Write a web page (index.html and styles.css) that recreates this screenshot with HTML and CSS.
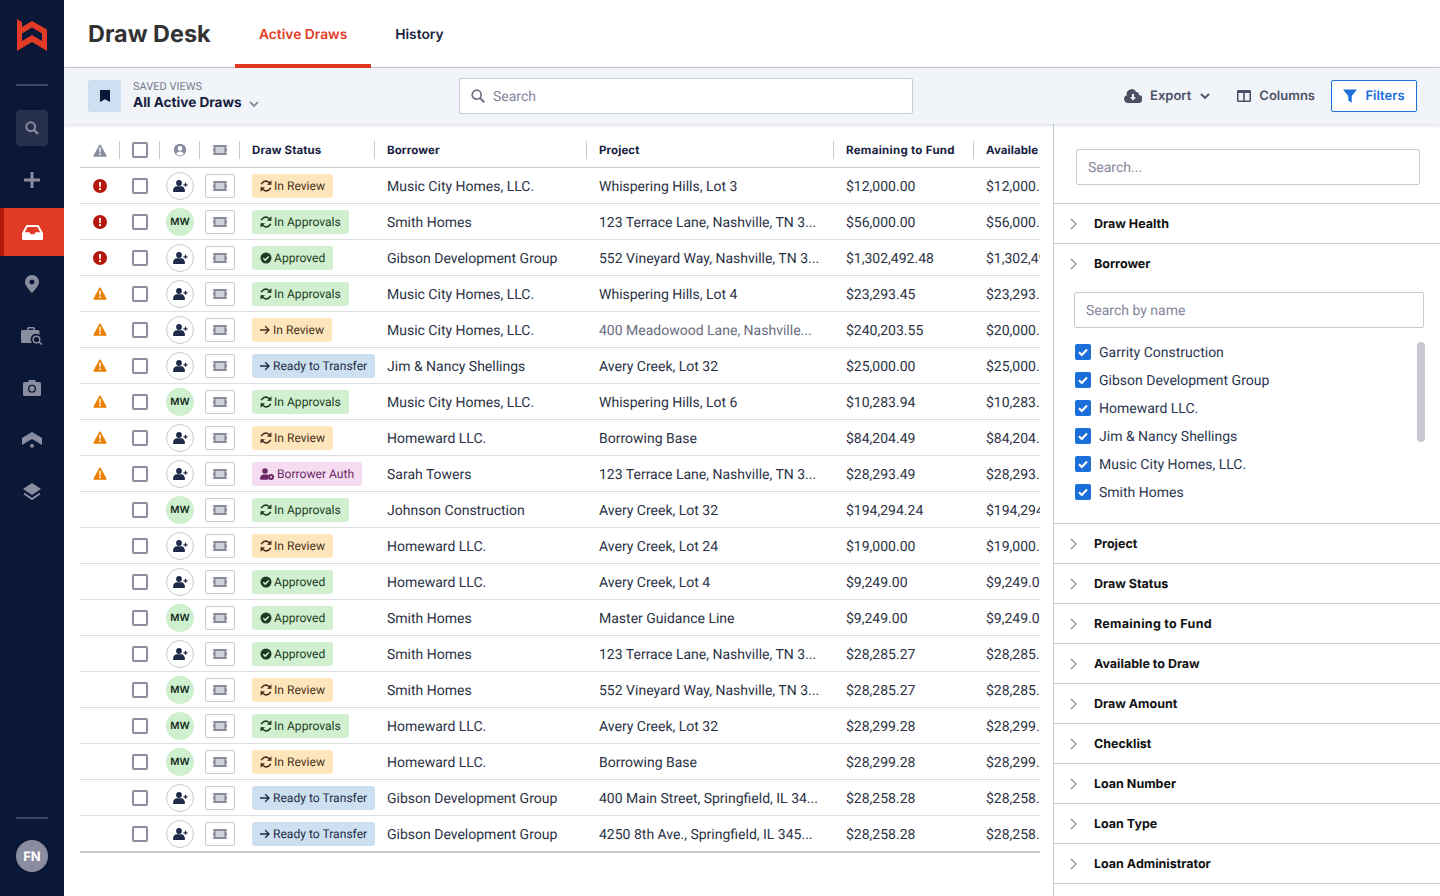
FILE: index.html
```html
<!DOCTYPE html>
<html lang="en">
<head>
<meta charset="utf-8">
<title>Draw Desk</title>
<link rel="stylesheet" href="styles.css">
</head>
<body>
<svg class="defs" aria-hidden="true">
  <symbol id="warn" viewBox="0 0 14 13"><path d="M7 1.2 13 12H1Z" fill="currentColor" stroke="currentColor" stroke-width="1.4" stroke-linejoin="round"/><path d="M6.2 3.8h1.6l-.2 4.6H6.4Z" fill="#fff"/><circle cx="7" cy="10.2" r=".95" fill="#fff"/></symbol>
  <symbol id="alert" viewBox="0 0 14 14"><circle cx="7" cy="7" r="7" fill="currentColor"/><path d="M6 3h2l-.3 5.2H6.3Z" fill="#fff"/><circle cx="7" cy="10.2" r="1.1" fill="#fff"/></symbol>
  <symbol id="userc" viewBox="0 0 14 14"><circle cx="7" cy="7" r="6.2" fill="currentColor"/><circle cx="7" cy="5.4" r="2.3" fill="#fff"/><path d="M3.2 11c.5-1.8 2-2.6 3.8-2.6s3.300.8 3.800 2.600A6 6 0 0 1 3.200 11Z" fill="#fff"/></symbol>
  <symbol id="uplus" viewBox="0 0 15 12"><circle cx="6" cy="3" r="2.900" fill="currentColor"/><path d="M0 11c0-3 2-4.700 3.800-4.700h4.400C10 6.300 12 8 12 11c0 .6-.4 1-1 1H1c-.6 0-1-.4-1-1Z" fill="currentColor"/><path d="M12.500 2.800v4M10.500 4.800h4" stroke="currentColor" stroke-width="1.300"/></symbol>
  <symbol id="ticket" viewBox="0 0 14 10"><path d="M.8 0h12.400a.8.8 0 0 1 .8.800v.8a1 1 0 0 0 0 2v2.800a1 1 0 0 0 0 2v.800a.8.8 0 0 1-.8.800H.8a.8.8 0 0 1-.8-.8v-.8a1 1 0 0 0 0-2V3.600a1 1 0 0 0 0-2V.8A.8.8 0 0 1 .8 0Z" fill="currentColor"/><rect x="2.600" y="2" width="8.800" height="6" rx=".6" fill="#cfd0d9"/></symbol>
  <symbol id="sync" viewBox="0.500 0.500 11 11"><g fill="none" stroke="currentColor" stroke-width="1.400"><path d="M10 4.600A4.200 4.200 0 0 0 2.700 3.100L1.500 4.300"/><path d="M2 7.400a4.200 4.200 0 0 0 7.300 1.500l1.200-1.200"/></g><path d="M11 .8v4.100H6.900ZM1 11.200V7.100h4.100Z" fill="currentColor"/></symbol>
  <symbol id="okc" viewBox="0 0 12 12"><circle cx="6" cy="6" r="5.500" fill="currentColor"/><path d="m3.300 6.200 1.900 1.900 3.500-3.600" fill="none" stroke="#d0f0d0" stroke-width="1.500"/></symbol>
  <symbol id="arrow" viewBox="1 0 12 12"><path d="M1 6h8.800M6.200 2.300 9.900 6 6.200 9.700" fill="none" stroke="currentColor" stroke-width="1.500"/></symbol>
  <symbol id="auth" viewBox="0 0 14 12"><circle cx="5" cy="3" r="2.800" fill="currentColor"/><path d="M0 11c0-3 1.700-4.500 3.300-4.500h3.400c1 0 1.700.5 2.200 1.200L8 11.800H1c-.6 0-1-.3-1-.8Z" fill="currentColor"/><circle cx="11" cy="9" r="3" fill="currentColor"/><circle cx="11" cy="9" r="1" fill="#f5dcf0"/></symbol>
  <symbol id="chev" viewBox="0 0 10 6"><path d="m1 1 4 4 4-4" fill="none" stroke="currentColor" stroke-width="1.800"/></symbol>
  <symbol id="chevr" viewBox="0 0 7 12"><path d="m1 1 5 5-5 5" fill="none" stroke="currentColor" stroke-width="1.300"/></symbol>
  <symbol id="tick" viewBox="0 0 16 16"><path d="m4 8.300 2.800 2.700 5.200-5.500" fill="none" stroke="#fff" stroke-width="2"/></symbol>
</svg>

<div class="app">
  <nav class="rail">
    <svg class="logo" viewBox="0 0 30 32" width="30" height="32"><path fill-rule="evenodd" fill="#e23b25" d="M0 0 5 3V8L15 2 30 10.500V32L15 23 0 32ZM5 14.500V22L15 16 25 22V14.500L15 8.500Z"/></svg>
    <div class="rule"></div>
    <ul class="rail-list">
      <li class="rail-item"><span class="rail-tile"><svg viewBox="0 0 14 14" width="14" height="14"><circle cx="5.700" cy="5.700" r="4.400" fill="none" stroke="currentColor" stroke-width="2"/><path d="m9 9 4 4" stroke="currentColor" stroke-width="2.400"/></svg></span></li>
      <li class="rail-item"><svg viewBox="0 0 16 16" width="16" height="16"><path d="M8 1v14M1 8h14" stroke="currentColor" stroke-width="3" stroke-linecap="round"/></svg></li>
      <li class="rail-item rail-active"><svg viewBox="0 0 21 15" width="21" height="15"><path d="M4.500 0h12l4.500 8v5.500a1.500 1.500 0 0 1-1.500 1.500h-18A1.500 1.500 0 0 1 0 13.500V8Z" fill="#fff"/><path d="M5.500 2h10l2.600 5.300h-4.600l-1.200 2h-3.600l-1.200-2H2.900Z" fill="#e23b25"/></svg></li>
      <li class="rail-item"><svg viewBox="0 0 14 18" width="14" height="18"><path fill-rule="evenodd" d="M7 0a7 7 0 0 1 7 7c0 3-3.500 7.500-7 11C3.500 14.500 0 10 0 7a7 7 0 0 1 7-7Zm0 4.500a2.500 2.500 0 1 0 0 5 2.500 2.500 0 0 0 0-5Z" fill="currentColor"/></svg></li>
      <li class="rail-item"><svg viewBox="0 0 22 18" width="22" height="18"><path d="M1.500 3H6V1.500A1.500 1.500 0 0 1 7.500 0h5A1.500 1.500 0 0 1 14 1.500V3h3a1.500 1.500 0 0 1 1.500 1.500V8a5.500 5.500 0 0 0-7.500 8H1.500A1.500 1.500 0 0 1 0 14.500v-10A1.500 1.500 0 0 1 1.500 3ZM7.500 1.500V3h5V1.500Z" fill="currentColor" fill-rule="evenodd"/><circle cx="15.500" cy="12.500" r="3.300" fill="none" stroke="currentColor" stroke-width="1.500"/><path d="m18 15 3 2.600" stroke="currentColor" stroke-width="1.500"/></svg></li>
      <li class="rail-item"><svg viewBox="0 0 18 16" width="18" height="16"><path fill-rule="evenodd" d="M1.500 2H5l1-2h6l1 2h3.500A1.500 1.500 0 0 1 18 3.500v11a1.500 1.500 0 0 1-1.500 1.500h-15A1.500 1.500 0 0 1 0 14.500v-11A1.500 1.500 0 0 1 1.500 2ZM9 4.800a4 4 0 1 0 0 8 4 4 0 0 0 0-8Zm0 1.300a2.700 2.700 0 1 1 0 5.400 2.700 2.700 0 0 1 0-5.400Z" fill="currentColor"/></svg></li>
      <li class="rail-item"><svg viewBox="0 0 20 16" width="20" height="16"><path d="M10 0 20 6v7l-10-6L0 13V6Z" fill="currentColor"/><circle cx="10" cy="13.800" r="2" fill="currentColor"/></svg></li>
      <li class="rail-item"><svg viewBox="0 0 18 19" width="18" height="19"><path d="M9 0 18 6 9 12 0 6Z" fill="currentColor"/><path d="M1 10.500 9 16l8-5.500" fill="none" stroke="currentColor" stroke-width="2"/></svg></li>
    </ul>
    <div class="rail-foot">
      <div class="rule"></div>
      <div class="me">FN</div>
    </div>
  </nav>

  <main class="main">
    <header class="top">
      <h1 class="title">Draw Desk</h1>
      <a class="tab tab-on">Active Draws</a>
      <a class="tab">History</a>
    </header>

    <section class="tools">
      <div class="views">
        <span class="views-tile"><svg viewBox="0 0 10 12" width="10" height="12"><path d="M0 0h10v12L5 9.200 0 12Z" fill="#0b1736"/></svg></span>
        <div class="views-text">
          <div class="views-label">SAVED VIEWS</div>
          <div class="views-name">All Active Draws <svg class="views-chev" width="10" height="6"><use href="#chev"/></svg></div>
        </div>
      </div>
      <label class="search">
        <svg viewBox="0 0 14 14" width="14" height="14"><circle cx="5.700" cy="5.700" r="4.500" fill="none" stroke="currentColor" stroke-width="1.700"/><path d="m9 9 4.300 4.300" stroke="currentColor" stroke-width="2"/></svg>
        <input class="search-input" placeholder="Search">
      </label>
      <div class="actions">
        <a class="action action-export">
          <svg viewBox="0 0 18 14" width="18" height="14"><path fill-rule="evenodd" d="M4 14a4 4 0 0 1-1.200-7.800A5 5 0 0 1 12.200 3 3 3 0 0 1 15 5.900 4 4 0 0 1 14 14ZM8 5v3.200H5.800L9 11.400l3.200-3.200H10V5Z" fill="currentColor"/></svg>
          Export
          <svg class="action-chev" width="10" height="6"><use href="#chev"/></svg>
        </a>
        <a class="action action-cols">
          <svg viewBox="0 0 14 12" width="14" height="12"><path fill-rule="evenodd" d="M1 0h12a1 1 0 0 1 1 1v10a1 1 0 0 1-1 1H1a1 1 0 0 1-1-1V1a1 1 0 0 1 1-1Zm.5 3v7.500h4.700V3Zm6.300 0v7.500h4.700V3Z" fill="currentColor"/></svg>
          Columns
        </a>
        <a class="filters">
          <svg viewBox="0 0 14 14" width="14" height="14"><path d="M0 .5h14L8.700 7v6.800L5.300 11.500V7Z" fill="currentColor"/></svg>
          Filters
        </a>
      </div>
    </section>

    <div class="body">
      <section class="grid-wrap">
        <div class="row head">
          <div class="c c-i"><svg class="ic14 grey" width="14" height="13"><use href="#warn"/></svg></div>
          <div class="c c-i"><span class="box"></span></div>
          <div class="c c-i"><svg class="ic14 grey" width="14" height="14"><use href="#userc"/></svg></div>
          <div class="c c-i"><svg class="grey" width="14" height="10"><use href="#ticket"/></svg></div>
          <div class="c c-t">Draw Status</div>
          <div class="c c-t">Borrower</div>
          <div class="c c-t">Project</div>
          <div class="c c-t wide">Remaining to Fund</div>
          <div class="c c-t c-end">Available</div>
        </div>

        <div class="row">
          <div class="c c-i"><svg class="red" width="14" height="14"><use href="#alert"/></svg></div><div class="c c-i"><span class="box"></span></div>
          <div class="c c-i"><span class="who"><svg width="15" height="12"><use href="#uplus"/></svg></span></div><div class="c c-i"><span class="tk"><svg class="grey" width="14" height="10"><use href="#ticket"/></svg></span></div>
          <div class="c"><span class="tag tag-review"><svg width="12" height="12"><use href="#sync"/></svg>In Review</span></div>
          <div class="c">Music City Homes, LLC.</div><div class="c">Whispering Hills, Lot 3</div><div class="c">$12,000.00</div><div class="c">$12,000.00</div>
        </div>
        <div class="row">
          <div class="c c-i"><svg class="red" width="14" height="14"><use href="#alert"/></svg></div><div class="c c-i"><span class="box"></span></div>
          <div class="c c-i"><span class="mw">MW</span></div><div class="c c-i"><span class="tk"><svg class="grey" width="14" height="10"><use href="#ticket"/></svg></span></div>
          <div class="c"><span class="tag tag-appr"><svg width="12" height="12"><use href="#sync"/></svg>In Approvals</span></div>
          <div class="c">Smith Homes</div><div class="c">123 Terrace Lane, Nashville, TN 3...</div><div class="c">$56,000.00</div><div class="c">$56,000.00</div>
        </div>
        <div class="row">
          <div class="c c-i"><svg class="red" width="14" height="14"><use href="#alert"/></svg></div><div class="c c-i"><span class="box"></span></div>
          <div class="c c-i"><span class="who"><svg width="15" height="12"><use href="#uplus"/></svg></span></div><div class="c c-i"><span class="tk"><svg class="grey" width="14" height="10"><use href="#ticket"/></svg></span></div>
          <div class="c"><span class="tag tag-ok"><svg width="12" height="12"><use href="#okc"/></svg>Approved</span></div>
          <div class="c">Gibson Development Group</div><div class="c">552 Vineyard Way, Nashville, TN 3...</div><div class="c">$1,302,492.48</div><div class="c">$1,302,492.48</div>
        </div>
        <div class="row">
          <div class="c c-i"><svg class="amber" width="14" height="13"><use href="#warn"/></svg></div><div class="c c-i"><span class="box"></span></div>
          <div class="c c-i"><span class="who"><svg width="15" height="12"><use href="#uplus"/></svg></span></div><div class="c c-i"><span class="tk"><svg class="grey" width="14" height="10"><use href="#ticket"/></svg></span></div>
          <div class="c"><span class="tag tag-appr"><svg width="12" height="12"><use href="#sync"/></svg>In Approvals</span></div>
          <div class="c">Music City Homes, LLC.</div><div class="c">Whispering Hills, Lot 4</div><div class="c">$23,293.45</div><div class="c">$23,293.45</div>
        </div>
        <div class="row">
          <div class="c c-i"><svg class="amber" width="14" height="13"><use href="#warn"/></svg></div><div class="c c-i"><span class="box"></span></div>
          <div class="c c-i"><span class="who"><svg width="15" height="12"><use href="#uplus"/></svg></span></div><div class="c c-i"><span class="tk"><svg class="grey" width="14" height="10"><use href="#ticket"/></svg></span></div>
          <div class="c"><span class="tag tag-review tag-go"><svg width="12" height="12"><use href="#arrow"/></svg>In Review</span></div>
          <div class="c">Music City Homes, LLC.</div><div class="c c-dim">400 Meadowood Lane, Nashville...</div><div class="c">$240,203.55</div><div class="c">$20,000.00</div>
        </div>
        <div class="row">
          <div class="c c-i"><svg class="amber" width="14" height="13"><use href="#warn"/></svg></div><div class="c c-i"><span class="box"></span></div>
          <div class="c c-i"><span class="who"><svg width="15" height="12"><use href="#uplus"/></svg></span></div><div class="c c-i"><span class="tk"><svg class="grey" width="14" height="10"><use href="#ticket"/></svg></span></div>
          <div class="c"><span class="tag tag-ready tag-go"><svg width="12" height="12"><use href="#arrow"/></svg>Ready to Transfer</span></div>
          <div class="c">Jim &amp; Nancy Shellings</div><div class="c">Avery Creek, Lot 32</div><div class="c">$25,000.00</div><div class="c">$25,000.00</div>
        </div>
        <div class="row">
          <div class="c c-i"><svg class="amber" width="14" height="13"><use href="#warn"/></svg></div><div class="c c-i"><span class="box"></span></div>
          <div class="c c-i"><span class="mw">MW</span></div><div class="c c-i"><span class="tk"><svg class="grey" width="14" height="10"><use href="#ticket"/></svg></span></div>
          <div class="c"><span class="tag tag-appr"><svg width="12" height="12"><use href="#sync"/></svg>In Approvals</span></div>
          <div class="c">Music City Homes, LLC.</div><div class="c">Whispering Hills, Lot 6</div><div class="c">$10,283.94</div><div class="c">$10,283.94</div>
        </div>
        <div class="row">
          <div class="c c-i"><svg class="amber" width="14" height="13"><use href="#warn"/></svg></div><div class="c c-i"><span class="box"></span></div>
          <div class="c c-i"><span class="who"><svg width="15" height="12"><use href="#uplus"/></svg></span></div><div class="c c-i"><span class="tk"><svg class="grey" width="14" height="10"><use href="#ticket"/></svg></span></div>
          <div class="c"><span class="tag tag-review"><svg width="12" height="12"><use href="#sync"/></svg>In Review</span></div>
          <div class="c">Homeward LLC.</div><div class="c">Borrowing Base</div><div class="c">$84,204.49</div><div class="c">$84,204.49</div>
        </div>
        <div class="row">
          <div class="c c-i"><svg class="amber" width="14" height="13"><use href="#warn"/></svg></div><div class="c c-i"><span class="box"></span></div>
          <div class="c c-i"><span class="who"><svg width="15" height="12"><use href="#uplus"/></svg></span></div><div class="c c-i"><span class="tk"><svg class="grey" width="14" height="10"><use href="#ticket"/></svg></span></div>
          <div class="c"><span class="tag tag-auth"><svg width="14" height="12"><use href="#auth"/></svg>Borrower Auth</span></div>
          <div class="c">Sarah Towers</div><div class="c">123 Terrace Lane, Nashville, TN 3...</div><div class="c">$28,293.49</div><div class="c">$28,293.49</div>
        </div>
        <div class="row">
          <div class="c c-i"></div><div class="c c-i"><span class="box"></span></div>
          <div class="c c-i"><span class="mw">MW</span></div><div class="c c-i"><span class="tk"><svg class="grey" width="14" height="10"><use href="#ticket"/></svg></span></div>
          <div class="c"><span class="tag tag-appr"><svg width="12" height="12"><use href="#sync"/></svg>In Approvals</span></div>
          <div class="c">Johnson Construction</div><div class="c">Avery Creek, Lot 32</div><div class="c">$194,294.24</div><div class="c">$194,294.24</div>
        </div>
        <div class="row">
          <div class="c c-i"></div><div class="c c-i"><span class="box"></span></div>
          <div class="c c-i"><span class="who"><svg width="15" height="12"><use href="#uplus"/></svg></span></div><div class="c c-i"><span class="tk"><svg class="grey" width="14" height="10"><use href="#ticket"/></svg></span></div>
          <div class="c"><span class="tag tag-review"><svg width="12" height="12"><use href="#sync"/></svg>In Review</span></div>
          <div class="c">Homeward LLC.</div><div class="c">Avery Creek, Lot 24</div><div class="c">$19,000.00</div><div class="c">$19,000.00</div>
        </div>
        <div class="row">
          <div class="c c-i"></div><div class="c c-i"><span class="box"></span></div>
          <div class="c c-i"><span class="who"><svg width="15" height="12"><use href="#uplus"/></svg></span></div><div class="c c-i"><span class="tk"><svg class="grey" width="14" height="10"><use href="#ticket"/></svg></span></div>
          <div class="c"><span class="tag tag-ok"><svg width="12" height="12"><use href="#okc"/></svg>Approved</span></div>
          <div class="c">Homeward LLC.</div><div class="c">Avery Creek, Lot 4</div><div class="c">$9,249.00</div><div class="c">$9,249.00</div>
        </div>
        <div class="row">
          <div class="c c-i"></div><div class="c c-i"><span class="box"></span></div>
          <div class="c c-i"><span class="mw">MW</span></div><div class="c c-i"><span class="tk"><svg class="grey" width="14" height="10"><use href="#ticket"/></svg></span></div>
          <div class="c"><span class="tag tag-ok"><svg width="12" height="12"><use href="#okc"/></svg>Approved</span></div>
          <div class="c">Smith Homes</div><div class="c">Master Guidance Line</div><div class="c">$9,249.00</div><div class="c">$9,249.00</div>
        </div>
        <div class="row">
          <div class="c c-i"></div><div class="c c-i"><span class="box"></span></div>
          <div class="c c-i"><span class="who"><svg width="15" height="12"><use href="#uplus"/></svg></span></div><div class="c c-i"><span class="tk"><svg class="grey" width="14" height="10"><use href="#ticket"/></svg></span></div>
          <div class="c"><span class="tag tag-ok"><svg width="12" height="12"><use href="#okc"/></svg>Approved</span></div>
          <div class="c">Smith Homes</div><div class="c">123 Terrace Lane, Nashville, TN 3...</div><div class="c">$28,285.27</div><div class="c">$28,285.27</div>
        </div>
        <div class="row">
          <div class="c c-i"></div><div class="c c-i"><span class="box"></span></div>
          <div class="c c-i"><span class="mw">MW</span></div><div class="c c-i"><span class="tk"><svg class="grey" width="14" height="10"><use href="#ticket"/></svg></span></div>
          <div class="c"><span class="tag tag-review"><svg width="12" height="12"><use href="#sync"/></svg>In Review</span></div>
          <div class="c">Smith Homes</div><div class="c">552 Vineyard Way, Nashville, TN 3...</div><div class="c">$28,285.27</div><div class="c">$28,285.27</div>
        </div>
        <div class="row">
          <div class="c c-i"></div><div class="c c-i"><span class="box"></span></div>
          <div class="c c-i"><span class="mw">MW</span></div><div class="c c-i"><span class="tk"><svg class="grey" width="14" height="10"><use href="#ticket"/></svg></span></div>
          <div class="c"><span class="tag tag-appr"><svg width="12" height="12"><use href="#sync"/></svg>In Approvals</span></div>
          <div class="c">Homeward LLC.</div><div class="c">Avery Creek, Lot 32</div><div class="c">$28,299.28</div><div class="c">$28,299.28</div>
        </div>
        <div class="row">
          <div class="c c-i"></div><div class="c c-i"><span class="box"></span></div>
          <div class="c c-i"><span class="mw">MW</span></div><div class="c c-i"><span class="tk"><svg class="grey" width="14" height="10"><use href="#ticket"/></svg></span></div>
          <div class="c"><span class="tag tag-review"><svg width="12" height="12"><use href="#sync"/></svg>In Review</span></div>
          <div class="c">Homeward LLC.</div><div class="c">Borrowing Base</div><div class="c">$28,299.28</div><div class="c">$28,299.28</div>
        </div>
        <div class="row">
          <div class="c c-i"></div><div class="c c-i"><span class="box"></span></div>
          <div class="c c-i"><span class="who"><svg width="15" height="12"><use href="#uplus"/></svg></span></div><div class="c c-i"><span class="tk"><svg class="grey" width="14" height="10"><use href="#ticket"/></svg></span></div>
          <div class="c"><span class="tag tag-ready tag-go"><svg width="12" height="12"><use href="#arrow"/></svg>Ready to Transfer</span></div>
          <div class="c">Gibson Development Group</div><div class="c">400 Main Street, Springfield, IL 34...</div><div class="c">$28,258.28</div><div class="c">$28,258.28</div>
        </div>
        <div class="row row-last">
          <div class="c c-i"></div><div class="c c-i"><span class="box"></span></div>
          <div class="c c-i"><span class="who"><svg width="15" height="12"><use href="#uplus"/></svg></span></div><div class="c c-i"><span class="tk"><svg class="grey" width="14" height="10"><use href="#ticket"/></svg></span></div>
          <div class="c"><span class="tag tag-ready tag-go"><svg width="12" height="12"><use href="#arrow"/></svg>Ready to Transfer</span></div>
          <div class="c">Gibson Development Group</div><div class="c">4250 8th Ave., Springfield, IL 345...</div><div class="c">$28,258.28</div><div class="c">$28,258.28</div>
        </div>
      </section>

      <aside class="panel">
        <div class="panel-search"><input class="field" placeholder="Search..."></div>
        <div class="fhead"><svg class="fchev" width="7" height="12"><use href="#chevr"/></svg>Draw Health</div>
        <div class="fsec">
          <div class="fhead fhead-open"><svg class="fchev" width="7" height="12"><use href="#chevr"/></svg>Borrower</div>
          <div class="fsec-search"><input class="field" placeholder="Search by name"></div>
          <ul class="checks">
            <li class="check"><span class="cb"><svg width="16" height="16"><use href="#tick"/></svg></span>Garrity Construction</li>
            <li class="check"><span class="cb"><svg width="16" height="16"><use href="#tick"/></svg></span>Gibson Development Group</li>
            <li class="check"><span class="cb"><svg width="16" height="16"><use href="#tick"/></svg></span>Homeward LLC.</li>
            <li class="check"><span class="cb"><svg width="16" height="16"><use href="#tick"/></svg></span>Jim &amp; Nancy Shellings</li>
            <li class="check"><span class="cb"><svg width="16" height="16"><use href="#tick"/></svg></span>Music City Homes, LLC.</li>
            <li class="check"><span class="cb"><svg width="16" height="16"><use href="#tick"/></svg></span>Smith Homes</li>
          </ul>
          <div class="thumb"></div>
        </div>
        <div class="fhead"><svg class="fchev" width="7" height="12"><use href="#chevr"/></svg>Project</div>
        <div class="fhead"><svg class="fchev" width="7" height="12"><use href="#chevr"/></svg>Draw Status</div>
        <div class="fhead wide"><svg class="fchev" width="7" height="12"><use href="#chevr"/></svg>Remaining to Fund</div>
        <div class="fhead"><svg class="fchev" width="7" height="12"><use href="#chevr"/></svg>Available to Draw</div>
        <div class="fhead"><svg class="fchev" width="7" height="12"><use href="#chevr"/></svg>Draw Amount</div>
        <div class="fhead"><svg class="fchev" width="7" height="12"><use href="#chevr"/></svg>Checklist</div>
        <div class="fhead"><svg class="fchev" width="7" height="12"><use href="#chevr"/></svg>Loan Number</div>
        <div class="fhead"><svg class="fchev" width="7" height="12"><use href="#chevr"/></svg>Loan Type</div>
        <div class="fhead"><svg class="fchev" width="7" height="12"><use href="#chevr"/></svg>Loan Administrator</div>
      </aside>
    </div>
  </main>
</div>
</body>
</html>
```
FILE: styles.css
```css
* { box-sizing: border-box; }
html, body { margin: 0; height: 100%; }
body { font-family: Roboto, "Liberation Sans", sans-serif; font-size: 14px; color: #2b3244; background: #fff; overflow: hidden; text-rendering: geometricPrecision; }
input { text-rendering: geometricPrecision; }
.defs { display: none; }
ul { list-style: none; margin: 0; padding: 0; }

.app { display: flex; height: 896px; }

/* rail */
.rail { width: 64px; flex: none; background: #0b1736; color: #8a8d9f; display: flex; flex-direction: column; align-items: center; padding-top: 19px; }
.logo { display: block; flex: none; }
.rule { width: 32px; height: 2px; background: #3a4560; flex: none; }
.logo + .rule { margin-top: 33px; }
.rail-list { width: 100%; margin-top: 18px; display: flex; flex-direction: column; gap: 4px; }
.rail-item { height: 48px; display: flex; align-items: center; justify-content: center; }
.rail-tile { width: 32px; height: 36px; border-radius: 4px; background: #262f4b; display: flex; align-items: center; justify-content: center; }
.rail-active { background: #e23b25; border-left: 4px solid #b01a0a; padding-right: 4px; }
.rail-foot { margin-top: auto; padding-bottom: 24px; display: flex; flex-direction: column; align-items: center; gap: 21px; }
.me { width: 32px; height: 32px; padding-top: 1px; border-radius: 50%; background: #8a8d9f; color: #fff; font: 700 13px Inter, sans-serif; display: flex; align-items: center; justify-content: center; }

/* main */
.main { flex: 1; min-width: 0; display: flex; flex-direction: column; }
.top { height: 68px; flex: none; display: flex; align-items: stretch; padding-left: 24px; border-bottom: 1px solid #c8cad3; }
.title { width: 147px; flex: none; margin: 0; font: 700 23.400px/68px Inter, sans-serif; color: #333; white-space: nowrap; }
.tab { display: flex; align-items: center; padding: 5px 24px 0; font: 600 13.800px Inter, sans-serif; color: #1a2340; margin-bottom: -1px; border-bottom: 4px solid transparent; }
.tab-on { color: #e23b25; border-bottom-color: #e23b25; }

.tools { height: 56px; flex: none; background: #f1f4f8; display: flex; align-items: center; padding: 0 23px 0 24px; box-shadow: 0 1px 4px rgba(20, 30, 60, .18); position: relative; z-index: 1; }
.views { display: flex; align-items: center; gap: 12px; width: 371px; flex: none; }
.views-tile { width: 33px; height: 32px; border-radius: 3px; background: #cce0f1; display: flex; align-items: center; justify-content: center; }
.views-label { font-size: 11px; line-height: 14px; color: #777b8d; }
.views-name { font: 700 13.600px/18px Inter, sans-serif; color: #16213f; display: flex; align-items: center; gap: 4px; white-space: nowrap; }
.views-chev { color: #8a8d9f; margin-left: 3px; margin-top: 2px; }
.search { width: 454px; height: 36px; flex: none; display: flex; align-items: center; gap: 8px; padding-left: 11px; background: #fff; border: 1px solid #c8cad3; border-radius: 2px; color: #6e7285; }
.search-input { flex: 1; min-width: 0; border: 0; outline: 0; font: 14px Roboto, sans-serif; padding: 2px 0 0; background: none; }
.search-input::placeholder, .field::placeholder { color: #85889a; opacity: 1; }
.actions { margin-left: auto; display: flex; align-items: center; }
.action { display: flex; align-items: center; font: 600 13px Inter, sans-serif; color: #4c5064; }
.action-export { gap: 8px; margin-right: 27px; }
.action-chev { margin-left: 1px; }
.action-cols { gap: 8px; margin-right: 16px; }
.filters { width: 86px; height: 32px; display: flex; align-items: center; justify-content: center; gap: 8px; background: #fff; border: 1px solid #1a6fd8; border-radius: 2px; color: #1a6fd8; font: 600 13px Inter, sans-serif; }

/* body */
.body { flex: 1; min-height: 0; display: flex; }
.grid-wrap { flex: 1; min-width: 0; padding: 8px 13px 0 16px; }
.row { display: grid; grid-template-columns: 40px 40px 40px 40px 135px 212px 247px 140px 66px; height: 36px; border-bottom: 1px solid #dcdde3; }
.row-last { border-bottom-color: #c8cad3; box-shadow: 0 1px 0 #c8cad3; }
.head { border-bottom: 1px solid #c8cad3; }
.c { display: flex; align-items: center; padding: 1px 0 0 12px; white-space: nowrap; overflow: hidden; min-width: 0; }
.row:not(.head) .c:not(.c-i) { padding-top: 3px; }
.c-i { padding-left: 0; justify-content: center; }
.c-dim { color: #696d80; }
.c-t { font: 700 11.500px Inter, sans-serif; letter-spacing: .1px; color: #16213f; }
.wide { letter-spacing: .3px; }
.head .c { position: relative; }
.head .c:not(.c-end)::after { content: ""; position: absolute; right: 0; top: 9px; height: 18px; width: 1px; background: #c8cad3; }
.grey { color: #8a8d9f; }
.red { color: #b3180c; }
.amber { color: #ea7f00; margin-top: -1px; }
.box { width: 16px; height: 16px; border: 2px solid #8a8d9f; border-radius: 2px; background: #fff; }
.who, .mw { width: 28px; height: 28px; border-radius: 50%; display: flex; align-items: center; justify-content: center; flex: none; }
.who { border: 1px solid #c8cad3; color: #1f2a4a; }
.mw { background: #cff0cf; color: #0f2a14; font: 600 10px Inter, sans-serif; }
.tk { width: 30px; height: 24px; border: 1px solid #c8cad3; border-radius: 2px; display: flex; align-items: center; justify-content: center; }
.tag { height: 24px; margin-top: -2px; border-radius: 3px; padding: 0 8px; display: inline-flex; align-items: center; gap: 2px; font-size: 12.100px; }
.tag svg { flex: none; }
.tag-go { gap: 1px; }
.tag-review { background: #fde5bc; color: #4a3320; }
.tag-appr, .tag-ok { background: #d0f0d0; color: #1d3b24; }
.tag-ready { background: #cce0f1; color: #1f2c44; }
.tag-auth { background: #f5dcf0; color: #6b2a66; gap: 3px; }

/* filter panel */
.panel { width: 387px; flex: none; border-left: 1px solid #c8cad3; overflow: hidden; font-size: 14px; }
.panel-search { padding: 25px 20px 18px 22px; border-bottom: 1px solid #c8cad3; }
.field { display: block; width: 100%; height: 36px; padding: 2px 11px 0; border: 1px solid #c8cad3; border-radius: 2px; outline: 0; font: 14px Roboto, sans-serif; }
.fhead { height: 40px; display: flex; align-items: center; gap: 17px; padding: 1px 0 0 16px; border-bottom: 1px solid #c8cad3; font: 700 12.500px Inter, sans-serif; color: #111; }
.fhead-open { border-bottom: 0; }
.fchev { color: #8e8e8e; flex: none; margin-top: -1px; }
.fsec { height: 280px; position: relative; border-bottom: 1px solid #c8cad3; }
.fsec-search { padding: 8px 16px 10px 20px; }
.checks { padding-left: 21px; }
.check { height: 28px; display: flex; align-items: center; gap: 8px; padding-top: 1px; color: #2b3650; }
.cb { width: 16px; height: 16px; margin-top: -1px; border-radius: 2px; background: #1a6fd8; display: flex; }
.thumb { position: absolute; left: 363px; top: 98px; width: 8px; height: 100px; border-radius: 4px; background: #c8c9d3; }
```
